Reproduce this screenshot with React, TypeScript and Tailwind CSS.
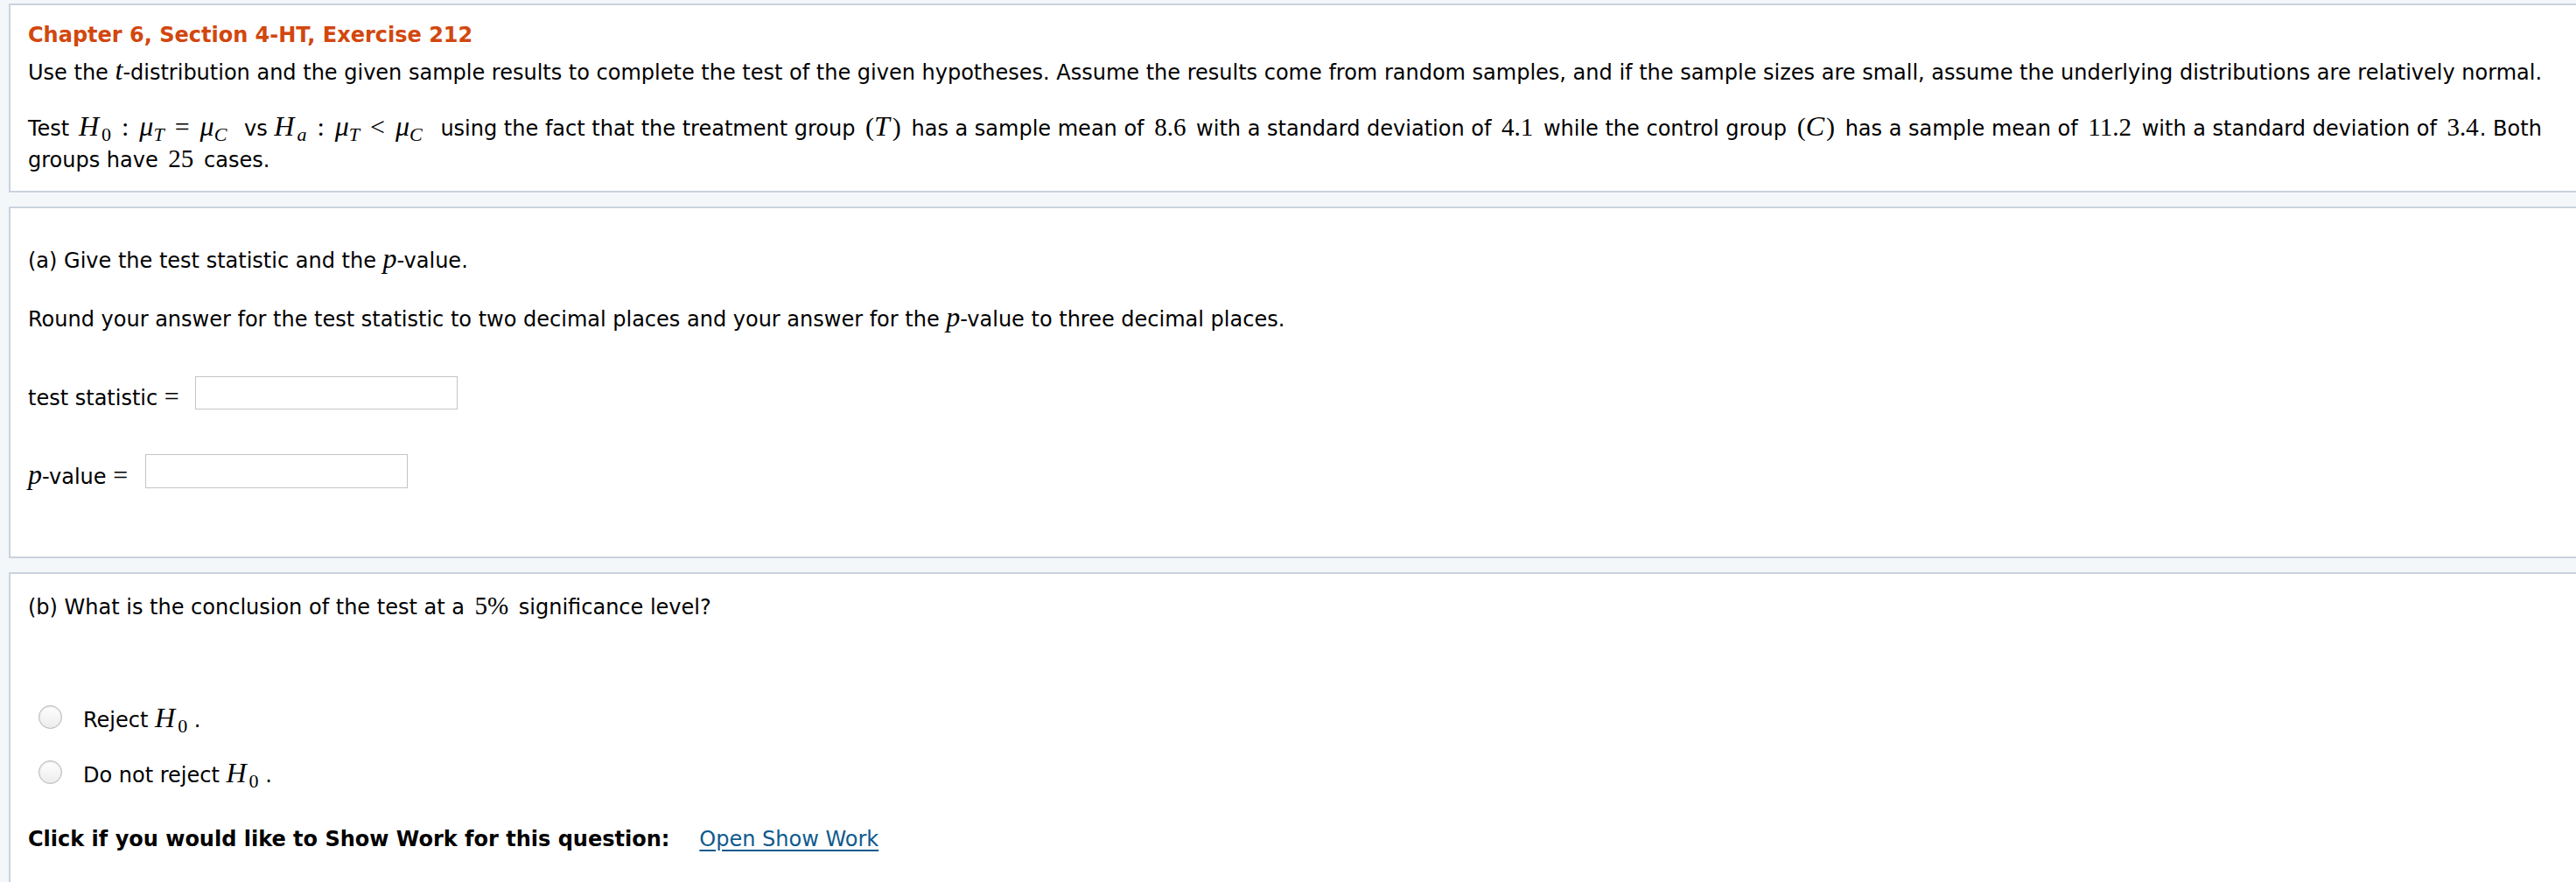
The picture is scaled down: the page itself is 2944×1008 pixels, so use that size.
import React from 'react';

const serif = "font-['Liberation_Serif','Times_New_Roman',serif]";

function V({ children, className = '' }: { children: React.ReactNode; className?: string }) {
  return <span className={`${serif} italic text-[32px] leading-none ${className}`}>{children}</span>;
}

function N({ children, className = 'mx-[4px]' }: { children: React.ReactNode; className?: string }) {
  return <span className={`${serif} text-[29px] leading-none ${className}`}>{children}</span>;
}

function Rel({ children }: { children: React.ReactNode }) {
  return <span className={`${serif} text-[30px] leading-none mx-[12px]`}>{children}</span>;
}

function Paren({ children }: { children: React.ReactNode }) {
  return <span className={`${serif} text-[30px] leading-none`}>{children}</span>;
}

function Sub({ children, italic, className = '' }: { children: React.ReactNode; italic?: boolean; className?: string }) {
  return (
    <sub className={`${serif} text-[22px] ${italic ? 'italic' : 'not-italic'} ${className}`}>{children}</sub>
  );
}

function H0() {
  return (
    <span className="whitespace-nowrap">
      <V className="pr-[3px]">H</V>
      <Sub>0</Sub>
    </span>
  );
}

function Radio() {
  return (
    <span className="mt-[2px] w-[27px] h-[27px] shrink-0 rounded-full border border-[#b4b4b4] bg-gradient-to-b from-[#ffffff] to-[#ececec] shadow-[inset_0_1px_2px_rgba(0,0,0,0.12)]" />
  );
}

function Card({ className, children }: { className: string; children: React.ReactNode }) {
  return (
    <div className={`bg-white border-2 border-r-0 border-[#cad2dd] pl-[20px] pr-[12px] ${className}`}>{children}</div>
  );
}

export default function App() {
  return (
    <div className="h-screen overflow-hidden bg-[#f4f7fa] pt-[4px] pl-[10px] text-black font-['DejaVu_Sans',Verdana,sans-serif] text-[24px] leading-[36px]">
      <Card className="pt-[20px] pb-[17px]">
        <h1 className="text-[24px] leading-[28px] font-bold text-[#d2470e]">Chapter 6, Section 4-HT, Exercise 212</h1>
        <p className="mt-[10px]">
          Use the <V>t</V>-distribution and the given sample results to complete the test of the given hypotheses. Assume the
          results come from random samples, and if the sample sizes are small, assume the underlying distributions are
          relatively normal.
        </p>
        <p className="mt-[27px]">
          Test{' '}
          <span className="ml-[3px]">
            <H0 />
          </span>
          <Rel>:</Rel>
          <V>μ</V>
          <Sub italic>T</Sub>
          <Rel>=</Rel>
          <V>μ</V>
          <Sub italic className="mr-[12px]">
            C
          </Sub>{' '}
          vs <V className="pr-[3px]">H</V>
          <Sub italic>a</Sub>
          <Rel>:</Rel>
          <V>μ</V>
          <Sub italic>T</Sub>
          <Rel>&lt;</Rel>
          <V>μ</V>
          <Sub italic className="mr-[13px]">
            C
          </Sub>{' '}
          using the fact that the treatment group{' '}
          <span className="mx-[4px]">
            <Paren>(</Paren>
            <V className="pr-[3px]">T</V>
            <Paren>)</Paren>
          </span>{' '}
          has a sample mean of <N>8.6</N> with a standard deviation of <N>4.1</N> while the control group{' '}
          <span className="mx-[4px]">
            <Paren>(</Paren>
            <V className="pr-[2px]">C</V>
            <Paren>)</Paren>
          </span>{' '}
          has a sample mean of <N>11.2</N> with a standard deviation of <N className="ml-[4px] mr-[1px]">3.4</N>. Both
          <br />
          groups have <N>25</N> cases.
        </p>
      </Card>

      <Card className="mt-[16px] pt-[41px] pb-[78px]">
        <p>
          (a) Give the test statistic and the <V>p</V>-value.
        </p>
        <p className="mt-[30px]">
          Round your answer for the test statistic to two decimal places and your answer for the <V>p</V>-value to three
          decimal places.
        </p>
        <div className="mt-[47px] flex items-end gap-[18px]">
          <span className="leading-none">
            test statistic <span className={`${serif} text-[30px]`}>=</span>
          </span>
          <input type="text" className="w-[300px] h-[38px] border border-[#c4c4c4] bg-white outline-none" />
        </div>
        <div className="mt-[51px] flex items-end gap-[20px]">
          <span className="leading-none">
            <V>p</V>-value <span className={`${serif} text-[30px]`}>=</span>
          </span>
          <input type="text" className="w-[300px] h-[39px] border border-[#c4c4c4] bg-white outline-none" />
        </div>
      </Card>

      <Card className="mt-[16px] pt-[20px] pb-[80px]">
        <p>
          (b) What is the conclusion of the test at a <N>5%</N> significance level?
        </p>
        <div className="mt-[92px] flex flex-col gap-[26px] pl-[12px]">
          <label className="flex items-start gap-[24px]">
            <Radio />
            <span>
              Reject <H0 /> .
            </span>
          </label>
          <label className="flex items-start gap-[24px]">
            <Radio />
            <span>
              Do not reject <H0 /> .
            </span>
          </label>
        </div>
        <div className="mt-[37px] flex items-baseline gap-[34px]">
          <span className="font-bold">Click if you would like to Show Work for this question:</span>
          <a href="#" className="text-[#0f5a8e] underline underline-offset-[4px]">
            Open Show Work
          </a>
        </div>
      </Card>
    </div>
  );
}
